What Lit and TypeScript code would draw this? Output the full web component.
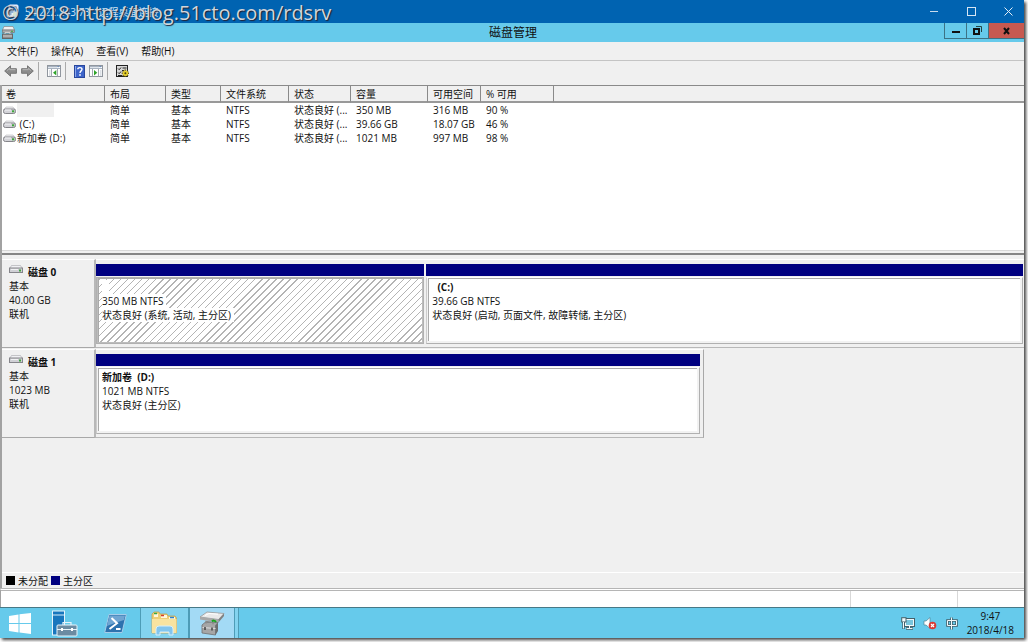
import { LitElement, html, css, svg } from "lit";
import { customElement } from "lit/decorators.js";
import { styleMap } from "lit/directives/style-map.js";

interface Volume {
  name: string;
  hidden?: boolean;
  layout: string;
  type: string;
  fs: string;
  status: string;
  capacity: string;
  free: string;
  percent: string;
}

interface Partition {
  label: string;
  size: string;
  status: string;
  share: number;
  selected?: boolean;
}

interface Disk {
  name: string;
  size: string;
  width: number;
  partitions: Partition[];
}

const volumes: Volume[] = [
  { name: "", hidden: true, layout: "简单", type: "基本", fs: "NTFS", status: "状态良好 (...", capacity: "350 MB", free: "316 MB", percent: "90 %" },
  { name: " (C:)", layout: "简单", type: "基本", fs: "NTFS", status: "状态良好 (...", capacity: "39.66 GB", free: "18.07 GB", percent: "46 %" },
  { name: "新加卷 (D:)", layout: "简单", type: "基本", fs: "NTFS", status: "状态良好 (...", capacity: "1021 MB", free: "997 MB", percent: "98 %" },
];

const disks: Disk[] = [
  {
    name: "磁盘 0",
    size: "40.00 GB",
    width: 100,
    partitions: [
      { label: "", size: "350 MB NTFS", status: "状态良好 (系统, 活动, 主分区)", share: 55, selected: true },
      { label: "  (C:)", size: "39.66 GB NTFS", status: "状态良好 (启动, 页面文件, 故障转储, 主分区)", share: 100 },
    ],
  },
  {
    name: "磁盘 1",
    size: "1023 MB",
    width: 65.5,
    partitions: [{ label: "新加卷  (D:)", size: "1021 MB NTFS", status: "状态良好 (主分区)", share: 1 }],
  },
];

const driveIcon = html`<svg width="13" height="9" viewBox="0 0 13 9" aria-hidden="true">
  <path d="M3 1h7l2.500 3H.5z" fill="#ededf0" stroke="#b8b8bc" stroke-width=".6" />
  <rect x=".5" y="3" width="12" height="4.500" rx="1.800" fill="#d3d3d8" stroke="#85858a" />
  <path d="M2 4h6" stroke="#f6f6f8" />
  <rect x="9" y="4.300" width="2.200" height="2" fill="#3fa63c" />
</svg>`;

const diskIcon = html`<svg width="14" height="9" viewBox="0 0 14 9" aria-hidden="true">
  <path d="M2.500 .5h9L13.500 4H.5z" fill="#f0f0f3" stroke="#b0b0b5" stroke-width=".7" />
  <rect x=".5" y="3" width="13" height="4.500" fill="#d0d0d5" stroke="#85858a" />
  <path d="M2 4.500h7" stroke="#f2f2f4" />
  <rect x="10" y="4.500" width="2" height="2" fill="#3fa63c" />
</svg>`;

const arrow = svg`<path d="M.7 6 6.500 .8V3.700H12.400V8.300H6.500V11.200Z" fill="#8c8c8c" stroke="#6e6e6e" stroke-width=".9" stroke-linejoin="round"/><path d="M3 5.600 5.700 3.200V4.700H11.500" fill="none" stroke="#b5b5b5"/>`;

const paneIcon = (left: boolean) => html`<svg width="14" height="12" viewBox="0 0 14 12" aria-hidden="true">
  <rect x=".5" y=".5" width="13" height="11" fill="#fff" stroke="#90969e" />
  <path d="M1 1.500h12M1 3.500h12" stroke="#a9b3c0" />
  <path d="M1 2.500h9" stroke="#dfe5ec" />
  <rect x="10.500" y="1" width="1.500" height="1.200" fill="#6f8fbd" />
  ${left
    ? svg`<path d="M4.500 4v7.500M10.500 4v7.500" stroke="#a2a8b0"/><path d="M2 6h1.500M2 8h1.500M2 10h1.500" stroke="#b9c1cc"/><path d="M9.300 5v5.400L6 7.700z" fill="#2fa32a"/>`
    : svg`<path d="M3.500 4v7.500M9.500 4v7.500" stroke="#a2a8b0"/><path d="M11 6h1.500M11 8h1.500M11 10h1.500" stroke="#b9c1cc"/><path d="M5 5v5.400l3.300-2.700z" fill="#2fa32a"/>`}
</svg>`;

const shared = css`
  :host {
    font: 10px/14px "Open Sans", "Noto Sans CJK SC", sans-serif;
    color: #111;
  }
  * {
    box-sizing: border-box;
  }
  button {
    font: inherit;
    color: inherit;
    background: none;
    border: 0;
    padding: 0;
    display: flex;
    align-items: center;
    justify-content: center;
  }
  svg {
    display: block;
    flex: none;
  }
`;

@customElement("remote-titlebar")
export class RemoteTitlebar extends LitElement {
  static styles = [
    shared,
    css`
      :host {
        display: block;
      }
      .outer {
        position: relative;
        display: flex;
        align-items: center;
        gap: 6px;
        height: 23px;
        padding-left: 6px;
        background: #0063b1;
        color: #cfe2f3;
      }
      .host {
        flex: 1;
      }
      .outer button {
        width: 31px;
        height: 23px;
      }
      .mark {
        position: absolute;
        left: 2px;
        top: 0;
        font-size: 20px;
        line-height: 25px;
        color: #d2d5da;
        text-shadow: 1px 1px 1px #223;
        white-space: nowrap;
        pointer-events: none;
      }
      .inner {
        display: grid;
        grid-template-columns: 82px 1fr 80px;
        height: 19px;
        background: #66caeb;
      }
      .inner h1 {
        margin: 0;
        font-size: 12px;
        line-height: 19px;
        font-weight: 400;
        text-align: center;
      }
      .app {
        padding: 3px 0 0 1px;
      }
      .controls {
        display: flex;
        height: 16px;
        border: 1px solid #3c7285;
        border-top: 0;
        border-right: 0;
      }
      .controls button {
        width: 22px;
        border-right: 1px solid #3c7285;
      }
      .controls .close {
        flex: 1;
        border: 0;
        background: #c75950;
      }
    `,
  ];

  render() {
    return html`
      <header class="outer">
        <svg width="13" height="15" viewBox="0 0 13 15" aria-hidden="true">
          <rect x="3" y="1" width="9" height="8" rx="1" fill="#d9e6f2" stroke="#eef" />
          <rect x="4.500" y="2.500" width="6" height="5" fill="#2167ae" />
          <rect x="1" y="6" width="8" height="7" rx="1" fill="#e7eef5" stroke="#8facc8" />
          <path d="M2.500 8h5M2.500 10h3" stroke="#3a78b5" />
          <circle cx="9.500" cy="10.500" r="2.500" fill="#d6e5d0" />
        </svg>
        <span class="host">54.222.243.73 - 远程桌面连接</span>
        <button aria-label="最小化远程窗口">
          <svg width="9" height="9"><path d="M0 4.500h8" stroke="#c8dbed" /></svg>
        </button>
        <button aria-label="最大化远程窗口">
          <svg width="9" height="9"><rect x=".5" y=".5" width="8" height="8" fill="none" stroke="#d6e5f3" /></svg>
        </button>
        <button aria-label="关闭远程窗口">
          <svg width="9" height="9"><path d="m.5.500 8 8m0-8-8 8" stroke="#e4eef7" /></svg>
        </button>
        <span class="mark">© 2018 http://blog.51cto.com/rdsrv</span>
      </header>
      <header class="inner">
        <div class="app">
          <svg width="14" height="13" viewBox="0 0 14 13" aria-hidden="true">
            <path d="M3 .5h9L13.500 4h-12z" fill="#f0f0f0" stroke="#888" stroke-width=".7" />
            <rect x="1.500" y="4" width="12" height="2.500" fill="#aaa" stroke="#777" stroke-width=".7" />
            <rect x="1.500" y="8" width="10" height="4.500" fill="#8d8d8d" stroke="#666" />
            <path d="M4 8V6.500h5V8M2 10h9" fill="none" stroke="#d0d0d0" />
            <path d="M10 5.300h2" stroke="#3fa63c" />
          </svg>
        </div>
        <h1>磁盘管理</h1>
        <div class="controls">
          <button aria-label="最小化"><svg width="8" height="8"><path d="M0 5h8" stroke="#111" stroke-width="2" /></svg></button>
          <button aria-label="还原">
            <svg width="9" height="9"><path d="M3 .5h5.500v5.500" fill="none" stroke="#244" /><rect x="1" y="3" width="5" height="5" fill="none" stroke="#111" stroke-width="2" /></svg>
          </button>
          <button class="close" aria-label="关闭"><svg width="8" height="8"><path d="m1 1 5 6m0-6L1 7" stroke="#111" stroke-width="2" /></svg></button>
        </div>
      </header>
    `;
  }
}

@customElement("console-bars")
export class ConsoleBars extends LitElement {
  static styles = [
    shared,
    css`
      :host {
        display: block;
        background: #f0f0f0;
      }
      .menu {
        display: flex;
        gap: 13px;
        height: 19px;
        padding-left: 7px;
        border-bottom: 1px solid #c4c4c4;
      }
      .tools {
        display: flex;
        align-items: center;
        gap: 4px;
        height: 24px;
        padding: 0 0 4px 4px;
      }
      .sep {
        width: 1px;
        height: 18px;
        margin-right: 4px;
        background: #aaa;
      }
    `,
  ];

  render() {
    return html`
      <nav class="menu">
        ${["文件(F)", "操作(A)", "查看(V)", "帮助(H)"].map((t) => html`<button>${t}</button>`)}
      </nav>
      <div class="tools" role="toolbar">
        <button aria-label="后退"><svg width="13" height="12">${arrow}</svg></button>
        <button aria-label="前进"><svg width="13" height="12"><g transform="matrix(-1 0 0 1 13 0)">${arrow}</g></svg></button>
        <span class="sep"></span>
        <button aria-label="显示/隐藏控制台树">${paneIcon(true)}</button>
        <span class="sep"></span>
        <button aria-label="帮助">
          <svg width="11" height="13" viewBox="0 0 11 13">
            <rect x=".5" y=".5" width="10" height="12" fill="#3d64c9" stroke="#2a479c" />
            <path d="M1.500 1v11" stroke="#8ba7ea" />
            <path d="M3.800 4.300C3.800 2 8 2 8 4.300 8 6 6 5.800 6 8" fill="none" stroke="#fff" stroke-width="1.400" />
            <rect x="5.200" y="9.200" width="1.600" height="1.600" fill="#fff" />
          </svg>
        </button>
        <button aria-label="显示/隐藏操作窗格">${paneIcon(false)}</button>
        <span class="sep"></span>
        <button aria-label="设置">
          <svg width="14" height="13" viewBox="0 0 14 13">
            <rect x=".5" y=".5" width="11" height="11" fill="#d8d8d8" stroke="#222" />
            <path d="M2 3.500 3.200 4.700 5 2.500M2 7.500 3.200 8.700 5 6.500M6.500 3h4M6 5.500h2M2 10.500h4" fill="none" stroke="#222" />
            <path d="M9.300 4.500v7.500M5.700 8.300h7.300M6.800 5.700l5.200 5.200M12 5.700l-5.200 5.200" stroke="#5c5313" stroke-width="1.600" />
            <circle cx="9.400" cy="8.300" r="2.700" fill="#e6cf2c" />
            <circle cx="9.400" cy="8.300" r="1" fill="#4b4410" />
          </svg>
        </button>
      </div>
    `;
  }
}

@customElement("volume-list")
export class VolumeList extends LitElement {
  static styles = [
    shared,
    css`
      :host {
        display: block;
        background: #fff;
        border-top: 1px solid #8a8a8a;
        border-bottom: 1px solid #d8d8d8;
        overflow: hidden;
      }
      table {
        width: 100%;
        table-layout: fixed;
        border-collapse: separate;
        border-spacing: 0;
      }
      th {
        height: 17px;
        padding: 1px 0 0 5px;
        font-weight: 400;
        line-height: 14px;
        text-align: left;
        background: #f0f0f0;
        border-right: 1px solid #8a8a8a;
        border-bottom: 2px solid #999;
        white-space: nowrap;
      }
      th:first-child {
        padding-left: 4px;
      }
      th:last-child {
        border-right: 0;
      }
      td {
        height: 14px;
        padding: 0 0 0 5px;
        line-height: 14px;
        white-space: pre;
      }
      .name {
        display: flex;
        align-items: center;
        gap: 1px;
        height: 14px;
        margin-left: -4px;
      }
      .blank {
        width: 37px;
        height: 14px;
        background: #f0f0f0;
      }
      .c1 { width: 103px; }
      .c2 { width: 61px; }
      .c3 { width: 55px; }
      .c4 { width: 68px; }
      .c5 { width: 62px; }
      .c6 { width: 77px; }
      .c7 { width: 53px; }
      .c8 { width: 73px; }
    `,
  ];

  render() {
    return html`<table>
      <colgroup>
        ${[1, 2, 3, 4, 5, 6, 7, 8].map((n) => html`<col class="c${n}" />`)}
        <col />
      </colgroup>
      <thead>
        <tr>
          ${["卷", "布局", "类型", "文件系统", "状态", "容量", "可用空间", "% 可用", ""].map((t) => html`<th scope="col">${t}</th>`)}
        </tr>
      </thead>
      <tbody>
        ${volumes.map(
          (v) => html`<tr>
            <td><span class="name">${driveIcon}${v.hidden ? html`<span class="blank"></span>` : html`<span>${v.name}</span>`}</span></td>
            <td>${v.layout}</td>
            <td>${v.type}</td>
            <td>${v.fs}</td>
            <td>${v.status}</td>
            <td>${v.capacity}</td>
            <td>${v.free}</td>
            <td>${v.percent}</td>
            <td></td>
          </tr>`
        )}
      </tbody>
    </table>`;
  }
}

@customElement("disk-map")
export class DiskMap extends LitElement {
  static styles = [
    shared,
    css`
      :host {
        display: flex;
        flex-direction: column;
        gap: 1px;
        padding-top: 4px;
        background: #f0f0f0;
        border-top: 2px solid #858585;
      }
      .disk {
        display: grid;
        grid-template-columns: 94px 1fr;
        height: 89px;
      }
      .info {
        padding: 5px 0 0 7px;
        border-right: 2px solid #b8b8b8;
        border-bottom: 1px solid #a8a8a8;
        border-top: 1px solid #fff;
      }
      .info p,
      .info h2,
      .part p,
      .part h3 {
        margin: 0;
        font-size: 10px;
        line-height: 14px;
        white-space: pre;
      }
      .info h2 {
        display: flex;
        gap: 5px;
      }
      .lane {
        display: flex;
        gap: 2px;
        padding: 4px 1px 3px 0;
        border-top: 1px solid #fff;
        border-bottom: 1px solid #b8b8b8;
      }
      .lane.short {
        padding-right: 3px;
        border-right: 1px solid #a8a8a8;
      }
      .part {
        display: flex;
        flex-direction: column;
        flex-basis: 0;
        min-width: 0;
      }
      .bar {
        height: 12px;
        background: #000080;
      }
      .body {
        display: flex;
        flex: 1;
        margin-top: 1px;
        padding: 0 2px 2px 1px;
        background: #f2f2f2;
        border: 1px solid #b0b0b0;
        border-top-color: #fff;
        border-left-color: #ccc;
      }
      .face {
        flex: 1;
        min-width: 0;
        padding: 1px 0 0 3px;
        background: #fff;
        border-top: 1px solid #aaa;
        border-left: 1px solid #aaa;
        overflow: hidden;
      }
      .selected .body {
        padding: 0 1px 1px 1px;
        border-color: #b0b0b0;
        background: #bcbcbc;
      }
      .selected .face {
        background: repeating-linear-gradient(135deg, #b4b4b4 0 1px, #fff 1px 5px);
      }
      .face h3,
      .face p {
        width: fit-content;
        min-width: 7px;
        height: 14px;
        padding-right: 3px;
        background: #fff;
      }
    `,
  ];

  render() {
    return disks.map(
      (d) => html`<section class="disk">
        <div class="info">
          <h2>${diskIcon}<span>${d.name}</span></h2>
          <p>基本</p>
          <p>${d.size}</p>
          <p>联机</p>
        </div>
        <div class="lane ${d.width < 100 ? "short" : ""}" style=${styleMap({ width: `${d.width}%` })}>
          ${d.partitions.map(
            (p) => html`<article class="part ${p.selected ? "selected" : ""}" style=${styleMap({ flexGrow: String(p.share) })}>
              <div class="bar"></div>
              <div class="body">
                <div class="face">
                  <h3>${p.label}</h3>
                  <p>${p.size}</p>
                  <p>${p.status}</p>
                </div>
              </div>
            </article>`
          )}
        </div>
      </section>`
    );
  }
}

@customElement("server-taskbar")
export class ServerTaskbar extends LitElement {
  static styles = [
    shared,
    css`
      :host {
        display: flex;
        height: 31px;
        background: #66caeb;
        border-top: 1px solid #477987;
      }
      .task {
        width: 50px;
      }
      .start {
        width: 40px;
      }
      .open {
        background: #83d3ef;
        border-right: 2px solid #4d9cb7;
        border-left: 1px solid #4d9cb7;
      }
      .active {
        width: 45px;
        background: #a3daf5;
        border-right: 1px solid #4d9cb7;
      }
      .edge {
        width: 4px;
        background: #83d3ef;
        border-right: 1px solid #4d9cb7;
      }
      .tray {
        display: flex;
        align-items: center;
        gap: 8px;
        margin-left: auto;
        padding-right: 10px;
      }
      .clock {
        text-align: center;
      }
      .clock time {
        display: block;
      }
    `,
  ];

  render() {
    return html`
      <button class="start" aria-label="开始">
        <svg width="23" height="21" viewBox="0 0 23 21">
          <path d="M0 3 9.500 1.500V10H0zM10.500 1.300 22 0v10H10.500zM0 11h9.500v8.500L0 18zM10.500 11H22v10l-11.500-1.500z" fill="#fff" />
        </svg>
      </button>
      <button class="task" aria-label="服务器管理器">
        <svg width="26" height="27" viewBox="0 0 26 27">
          <rect x=".5" y="1" width="12" height="24" fill="#1876bd" stroke="#e7f4fb" />
          <path d="M1 5h11" stroke="#d8edf8" />
          <rect x="5" y="15" width="20" height="11" rx="1" fill="#6b8ba2" stroke="#e7f4fb" />
          <path d="M11 15v-2.500h8V15M5 19.500h20" fill="none" stroke="#e7f4fb" stroke-width="1.200" />
          <rect x="9" y="18" width="2" height="3" fill="#fff" /><rect x="19" y="18" width="2" height="3" fill="#fff" />
        </svg>
      </button>
      <button class="task" aria-label="PowerShell">
        <svg width="23" height="19" viewBox="0 0 23 19">
          <path d="M5 .5h17.300L18 18.500H.7z" fill="#2d72ae" stroke="#a6cce8" />
          <path d="M5.500 1.500H21L20 6Q10 9 3 12z" fill="#6fa5d2" />
          <path d="m7.500 4 5.500 5.200L5.500 15M12 15h4.500" fill="none" stroke="#fff" stroke-width="2" />
        </svg>
      </button>
      <button class="task open" aria-label="文件资源管理器">
        <svg width="27" height="25" viewBox="0 0 27 25">
          <path d="M1 3 3 1h5l1 2h7l1 2h7l1.500 2v15H1z" fill="#efcf76" stroke="#c49e45" stroke-width=".7" />
          <path d="M3 3h4v3H3zM10 4h6v3h-6zM18 6h6v3h-6z" fill="#fff8dc" />
          <path d="M3 2.500h3" stroke="#3aa642" stroke-width="1.500" /><path d="M10 4.500h3" stroke="#d43c2e" stroke-width="1.500" /><path d="M19 6.500h4" stroke="#2b83d0" stroke-width="1.500" />
          <path d="M1 8h24.500v14H1z" fill="#f8e3a0" />
          <path d="M5 24v-6q0-3 3-3h11q3 0 3 3v6h-4v-3H9v3z" fill="#82c5ee" stroke="#d5effc" />
        </svg>
      </button>
      <button class="task active" aria-label="磁盘管理">
        <svg width="26" height="25" viewBox="0 0 26 25">
          <path d="m1 6 7-5 17 1.500-5.500 6z" fill="#e9e9e9" stroke="#999" stroke-width=".8" />
          <path d="M1 6v2.500l18.500 3V8.500z" fill="#a8a8a8" /><path d="m19.500 8.500 5.500-6V5l-5.500 6.500z" fill="#808080" />
          <path d="m6 4.500 4-2 9 .7" fill="none" stroke="#fff" />
          <path d="m3 14 3-2.500h13l-2.500 3v9.500L3 22z" fill="#a6a6a6" stroke="#707070" stroke-width=".8" />
          <path d="m16.500 14.500 2.500-3v8.500l-2.500 4z" fill="#6d6d6d" />
          <path d="M7 12.500V10.500l7 .8v2" fill="none" stroke="#8a8a8a" stroke-width="1.500" />
          <path d="M13 10.500q2-2 4 .5" fill="none" stroke="#1aa51f" stroke-width="2" />
          <path d="m3.500 16.500 13 1" stroke="#dedede" />
          <path d="M6 16v3M13 16.500v3" stroke="#444" stroke-width="1.500" />
        </svg>
      </button>
      <span class="edge"></span>
      <div class="tray">
        <svg width="14" height="13" viewBox="0 0 14 13" aria-hidden="true">
          <rect x="4.500" y="2.500" width="8" height="6" fill="none" stroke="#44616c" stroke-width="3" />
          <path d="M8.500 9v2M5 11.500h7" stroke="#44616c" stroke-width="2.400" />
          <rect x="4.500" y="2.500" width="8" height="6" fill="#79c5dd" stroke="#f2f9fb" />
          <path d="M8.500 9v2M5.500 11.500h6" stroke="#f2f9fb" />
          <path d="M2.500 5v7" stroke="#44616c" stroke-width="2.400" />
          <rect x=".7" y=".7" width="4.300" height="4.300" fill="#f2f9fb" stroke="#44616c" />
          <path d="M2.500 5v6.500" stroke="#f2f9fb" />
        </svg>
        <svg width="14" height="13" viewBox="0 0 14 13" aria-hidden="true">
          <path d="M1 4h2l4-3.500v11L3 8H1z" fill="#fff" stroke="#4f8496" stroke-width=".7" />
          <circle cx="9.500" cy="8.500" r="3.800" fill="#d93a34" />
          <path d="m8 7 3 3m0-3-3 3" stroke="#fff" stroke-width="1.200" />
        </svg>
        <svg width="14" height="13" viewBox="0 0 14 13" aria-hidden="true">
          <path d="M2.500 3.500h9v5h-9zM6.500 .5v12" fill="none" stroke="#44616c" stroke-width="2.600" />
          <path d="M2.500 3.500h9v5h-9zM6.500 .5v12" fill="none" stroke="#f2f9fb" />
        </svg>
        <div class="clock"><time>9:47</time><time>2018/4/18</time></div>
      </div>
    `;
  }
}

@customElement("app-root")
export class AppRoot extends LitElement {
  static styles = [
    shared,
    css`
      :host {
        display: block;
        box-sizing: border-box;
        height: 100vh;
        padding: 0 4px 4px 0;
        background: #fff;
        overflow: hidden;
      }
      .window {
        display: flex;
        flex-direction: column;
        height: 100%;
        background: #f0f0f0;
        box-shadow: 2px 2px 3px #444;
      }
      .console {
        display: flex;
        flex-direction: column;
        flex: 1;
        min-height: 0;
        border-left: 2px solid #a2a2a2;
      }
      volume-list {
        flex: 166 0 0;
      }
      disk-map {
        flex: 316 0 0;
        margin-top: 2px;
      }
      .legend {
        display: flex;
        align-items: center;
        gap: 3px;
        height: 16px;
        padding-left: 4px;
        border-top: 1px solid #fff;
      }
      .key {
        width: 9px;
        height: 9px;
        background: #000;
      }
      .primary {
        background: #000080;
      }
      .status {
        display: grid;
        grid-template-columns: 1fr 107px 67px;
        height: 19px;
        background: #fff;
        border-top: 3px double #b5b5b5;
        border-left: 1px solid #a2a2a2;
      }
      .status span + span {
        border-left: 1px solid #d8d8d8;
      }
    `,
  ];

  render() {
    return html`<div class="window">
      <remote-titlebar></remote-titlebar>
      <console-bars></console-bars>
      <main class="console">
        <volume-list></volume-list>
        <disk-map></disk-map>
        <div class="legend">
          <span class="key"></span><span>未分配</span>
          <span class="key primary"></span><span>主分区</span>
        </div>
      </main>
      <footer class="status"><span></span><span></span><span></span></footer>
      <server-taskbar></server-taskbar>
    </div>`;
  }
}
